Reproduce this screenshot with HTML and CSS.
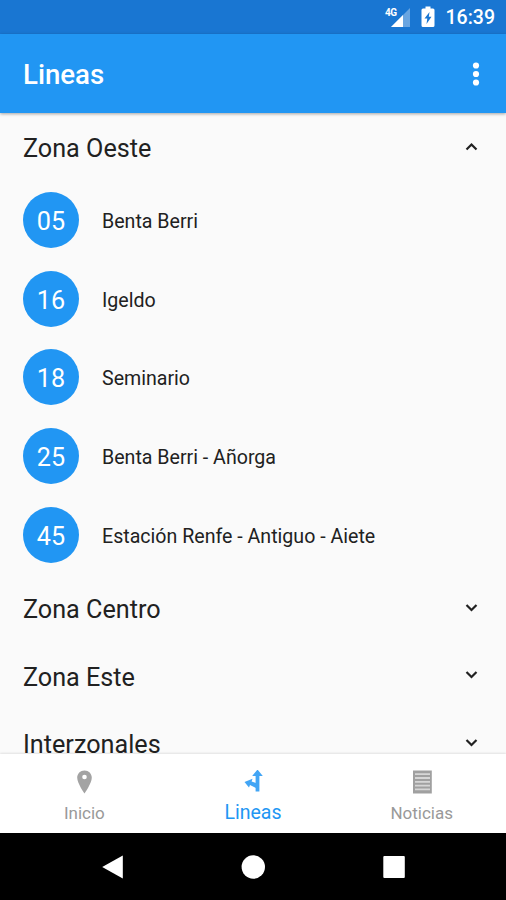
FILE: index.html
```html
<!DOCTYPE html>
<html lang="es">
<head>
  <meta charset="UTF-8">
  <meta name="viewport" content="width=device-width, initial-scale=1.0">
  <title>Lineas</title>
  <link rel="stylesheet" href="styles.css">
</head>
<body>
  <div class="app">
    <!-- Status bar -->
    <div class="status-bar">
      <svg class="signal" width="26" height="22" viewBox="0 0 26 22">
        <path d="M26 2V21H7Z" fill="#fff" fill-opacity="0.35"/>
        <path d="M19 9V21H7Z" fill="#fff"/>
        <text x="1" y="10" class="signal-text">4G</text>
      </svg>
      <svg class="battery" width="14" height="22" viewBox="0 0 14 22">
        <path d="M4.500 0.500h5v2H12q1.500 0 1.500 1.500v15.500q0 1.500-1.500 1.500H2q-1.500 0-1.500-1.500V4q0-1.500 1.500-1.500h2.500z" fill="#fff"/>
        <path d="M8.500 6L3.500 12.500H6.300L5.500 18L10.500 10.800H7.800Z" fill="#1976d2"/>
      </svg>
      <span class="clock">16:39</span>
    </div>

    <!-- Toolbar -->
    <header class="toolbar">
      <h1>Lineas</h1>
      <svg width="8" height="24" viewBox="0 0 8 24" fill="#fff">
        <circle cx="4" cy="3.500" r="3.100"/>
        <circle cx="4" cy="12" r="3.100"/>
        <circle cx="4" cy="20.500" r="3.100"/>
      </svg>
    </header>

    <!-- Zones -->
    <main class="zones">
      <div class="zone">
        <h2>Zona Oeste</h2>
        <svg class="chevron" width="14" height="10" viewBox="0 0 14 10"><path d="M1.500 7.500L6.500 2.500L11.500 7.500"/></svg>
      </div>
      <ul class="lines">
        <li><span class="number">05</span><span class="name">Benta Berri</span></li>
        <li><span class="number">16</span><span class="name">Igeldo</span></li>
        <li><span class="number">18</span><span class="name">Seminario</span></li>
        <li><span class="number">25</span><span class="name">Benta Berri - Añorga</span></li>
        <li><span class="number">45</span><span class="name">Estación Renfe - Antiguo - Aiete</span></li>
      </ul>
      <div class="zone">
        <h2>Zona Centro</h2>
        <svg class="chevron" width="14" height="10" viewBox="0 0 14 10"><path d="M1.500 2L6.500 7L11.500 2"/></svg>
      </div>
      <div class="zone">
        <h2>Zona Este</h2>
        <svg class="chevron" width="14" height="10" viewBox="0 0 14 10"><path d="M1.500 2L6.500 7L11.500 2"/></svg>
      </div>
      <div class="zone">
        <h2>Interzonales</h2>
        <svg class="chevron" width="14" height="10" viewBox="0 0 14 10"><path d="M1.500 2L6.500 7L11.500 2"/></svg>
      </div>
    </main>

    <!-- Bottom tabs -->
    <nav class="tabs">
      <a class="tab">
        <svg width="24" height="24" viewBox="0 0 24 24">
          <path d="M12.500 0.500C8.300 0.500 5.200 3.700 5.200 7.700C5.200 13 12.500 23.500 12.500 23.500S19.800 13 19.800 7.700C19.800 3.700 16.700 0.500 12.500 0.500ZM12.500 4.700A2.300 2.300 0 1 1 12.500 9.300A2.300 2.300 0 1 1 12.500 4.700Z" fill="#a3a3a3"/>
        </svg>
        <span>Inicio</span>
      </a>
      <a class="tab active">
        <svg width="24" height="24" viewBox="0 0 24 24" fill="#42a5f5">
          <path d="M16.500 -0.500L21.800 6H18.400V21.500H14.600V6H11.200Z"/>
          <path d="M3.500 12L11.500 8.800L10.600 11.500L15 13V18L9 15L8 17.500Z"/>
        </svg>
        <span>Lineas</span>
      </a>
      <a class="tab">
        <svg width="24" height="24" viewBox="0 0 24 24">
          <path d="M3 0.500H21.800V23.500H3Z" fill="#a0a0a0"/>
          <path d="M5 4.200H20M5 8H20M5 11.800H20M5 15.600H20M5 19.400H20" stroke="#d6d6d6" stroke-width="1.800"/>
        </svg>
        <span>Noticias</span>
      </a>
    </nav>

    <!-- System navigation -->
    <div class="system-nav">
      <svg width="24" height="26" viewBox="0 0 24 26"><path d="M22.800 1.500V24.500L2.200 13Z"/></svg>
      <svg width="24" height="26" viewBox="0 0 24 26"><circle cx="12.300" cy="13" r="11.700"/></svg>
      <svg width="24" height="26" viewBox="0 0 24 26"><rect x="1.300" y="2" width="21.500" height="22" rx="1"/></svg>
    </div>
  </div>
</body>
</html>
```
FILE: styles.css
```css
* {
  box-sizing: border-box;
}
body {
  margin: 0;
  font-family: Roboto, sans-serif;
  background-color: #fafafa;
  color: #212121;
}
.app {
  display: flex;
  flex-direction: column;
  height: 100vh;
  overflow: hidden;
}
.status-bar {
  display: flex;
  justify-content: flex-end;
  align-items: center;
  flex: none;
  height: 34px;
  padding-right: 11px;
  background-color: #1976d2;
  color: #fff;
}
.signal {
  margin-right: 11px;
}
.signal-text {
  font-size: 10px;
  font-weight: 700;
  letter-spacing: -0.5px;
  fill: #fff;
}
.battery {
  margin-right: 11px;
}
.clock {
  font-size: 19.500px;
  font-weight: 500;
  line-height: 34px;
  padding-top: 2px;
}
.toolbar {
  display: flex;
  justify-content: space-between;
  align-items: center;
  flex: none;
  height: 79px;
  padding: 0 26px 0 23px;
  background-color: #2196f3;
  color: #fff;
  box-shadow: 0 1px 3px rgba(0, 0, 0, 0.35);
  z-index: 1;
}
h1 {
  margin: 0;
  padding-top: 1px;
  font-size: 27.600px;
  font-weight: 500;
}
.zones {
  flex: 1;
  min-height: 0;
  overflow: hidden;
}
.zone {
  display: flex;
  justify-content: space-between;
  align-items: center;
  height: 67.500px;
  padding: 0 27px 0 23px;
}
h2 {
  margin: 0;
  padding-top: 4px;
  font-size: 25.200px;
  font-weight: 400;
}
.chevron {
  fill: none;
  stroke: #212121;
  stroke-width: 2.200;
}
.lines {
  list-style: none;
  margin: 0;
  padding: 0;
}
.lines li {
  display: flex;
  align-items: center;
  gap: 23px;
  height: 78.700px;
  padding-left: 23px;
}
.number {
  width: 56px;
  height: 56px;
  border-radius: 50%;
  background-color: #2196f3;
  color: #fff;
  font-size: 25.200px;
  line-height: 59px;
  text-align: center;
}
.name {
  font-size: 19.600px;
  padding-top: 3px;
}
.tabs {
  display: flex;
  flex: none;
  height: 79px;
  background-color: #fff;
  box-shadow: 0 -1px 2px rgba(0, 0, 0, 0.1);
  z-index: 1;
}
.tab {
  display: flex;
  flex-direction: column;
  align-items: center;
  flex: 1;
  padding-top: 16px;
  color: #999;
  font-size: 17px;
}
.tab span {
  line-height: 24px;
  margin-top: 7px;
}
.active {
  color: #2196f3;
  font-size: 19.500px;
}
.system-nav {
  display: flex;
  justify-content: center;
  align-items: center;
  gap: 117px;
  flex: none;
  height: 67px;
  background-color: #000;
  fill: #fff;
}
```
